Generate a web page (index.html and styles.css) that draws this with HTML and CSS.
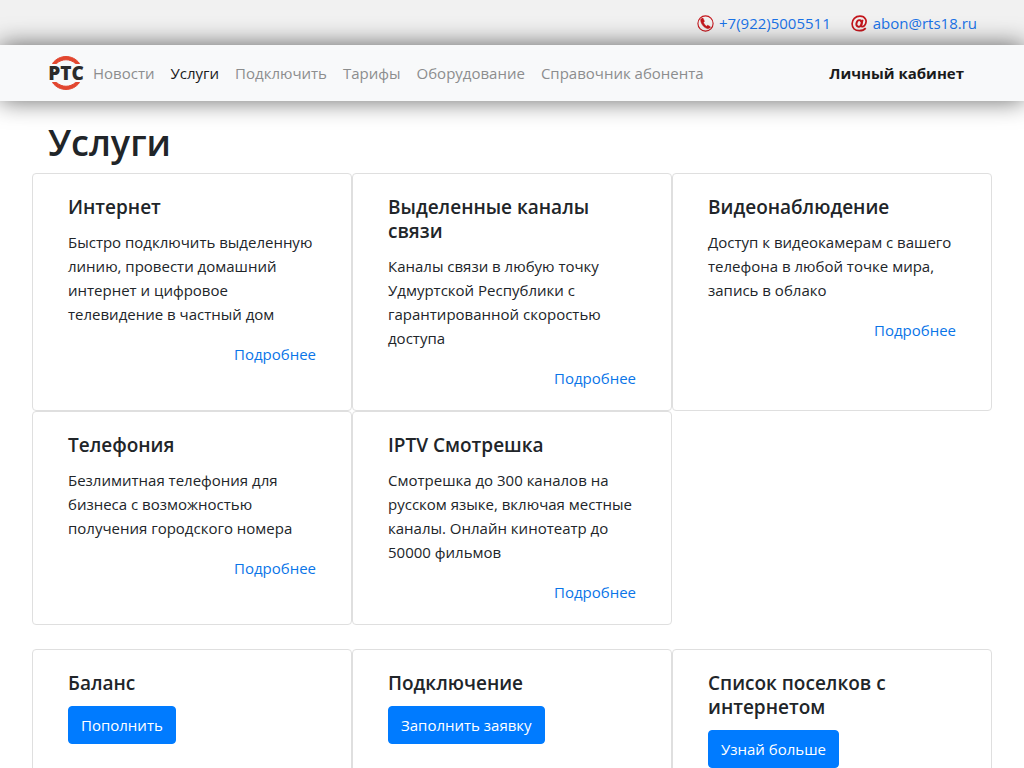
FILE: index.html
```html
<!DOCTYPE html>
<html lang="ru">
<head>
<meta charset="utf-8">
<meta name="viewport" content="width=device-width, initial-scale=1">
<title>РТС — Услуги</title>
<link rel="stylesheet" href="styles.css">
</head>
<body>
<header class="topbar">
  <a class="contact" href="tel:+79225005511">
    <svg class="contact-icon" viewBox="0 0 17 17" aria-hidden="true">
      <circle cx="8.500" cy="8.500" r="7.600" fill="none" stroke="#c4161c" stroke-width="1.100"/>
      <path d="M5.200 3.200 3.700 4.300C3.200 7.600 6.400 12.800 10.800 13.700L13.200 12.700C13.600 12.300 13.500 11.900 13.100 11.600L11.100 10.400C10.700 10.200 10.400 10.300 10.100 10.700L9.600 11.200C8.200 10.500 7 8.800 6.400 7.300L7 6.900C7.400 6.600 7.500 6.300 7.300 5.900L6.200 3.500C6 3.100 5.600 2.900 5.200 3.200Z" fill="#c4161c" stroke="#c4161c" stroke-width="0.500"/>
    </svg>
    <span>+7(922)5005511</span>
  </a>
  <a class="contact" href="mailto:abon@rts18.ru">
    <svg class="contact-icon" viewBox="0 0 17 17" aria-hidden="true" fill="none" stroke="#c4161c">
      <ellipse cx="8" cy="8.400" rx="2.500" ry="3.300" transform="rotate(18 8 8.400)" stroke-width="1.900"/>
      <path d="M11.700 4.700 10.400 10.400C10.200 12.200 12.200 12 13.400 10.700C17.200 5.800 14 1.200 9 1.200C4.400 1.200 1.100 4.500 1.100 8.800C1.100 13 4.100 15.700 8.300 15.700C11 15.700 13.200 14.900 14.700 13.100" stroke-width="1.700"/>
    </svg>
    <span>abon@rts18.ru</span>
  </a>
</header>

<nav class="navbar">
  <a class="brand" href="#" aria-label="РТС">
    <svg class="brand-logo" viewBox="0 0 36 36" role="img" aria-label="РТС">
      <path d="M4.500 8.500C11-.8 25-.8 31.500 8.500L27.500 8.500C22 3.500 14 3.500 8.500 8.500Z" fill="#e2462f" stroke="#e2462f"/>
      <path d="M4.500 27.500C11 36.800 25 36.800 31.500 27.500L27.500 27.500C22 32.500 14 32.500 8.500 27.500Z" fill="#e2462f" stroke="#e2462f"/>
      <text class="brand-text" x="18" y="25" text-anchor="middle">РТС</text>
    </svg>
  </a>
  <ul class="nav-list">
    <li><a class="nav-link" href="#">Новости</a></li>
    <li><a class="nav-link active" href="#" aria-current="page">Услуги</a></li>
    <li><a class="nav-link" href="#">Подключить</a></li>
    <li><a class="nav-link" href="#">Тарифы</a></li>
    <li><a class="nav-link" href="#">Оборудование</a></li>
    <li><a class="nav-link" href="#">Справочник абонента</a></li>
  </ul>
  <a class="account" href="#">Личный кабинет</a>
</nav>

<main class="page">
  <h1 class="page-title">Услуги</h1>
  <section class="cards">
    <article class="card">
      <h2 class="card-title">Интернет</h2>
      <p class="card-text">Быстро подключить выделенную линию, провести домашний интернет и цифровое телевидение в частный дом</p>
      <a class="more" href="#">Подробнее</a>
    </article>
    <article class="card">
      <h2 class="card-title">Выделенные каналы связи</h2>
      <p class="card-text">Каналы связи в любую точку Удмуртской Республики с гарантированной скоростью доступа</p>
      <a class="more" href="#">Подробнее</a>
    </article>
    <article class="card">
      <h2 class="card-title">Видеонаблюдение</h2>
      <p class="card-text">Доступ к видеокамерам с вашего телефона в любой точке мира, запись в облако</p>
      <a class="more" href="#">Подробнее</a>
    </article>
    <article class="card">
      <h2 class="card-title">Телефония</h2>
      <p class="card-text">Безлимитная телефония для бизнеса с возможностью получения городского номера</p>
      <a class="more" href="#">Подробнее</a>
    </article>
    <article class="card">
      <h2 class="card-title">IPTV Смотрешка</h2>
      <p class="card-text">Смотрешка до 300 каналов на русском языке, включая местные каналы. Онлайн кинотеатр до 50000 фильмов</p>
      <a class="more" href="#">Подробнее</a>
    </article>
  </section>
  <section class="cards">
    <article class="card">
      <h2 class="card-title">Баланс</h2>
      <button class="btn" type="button">Пополнить</button>
    </article>
    <article class="card">
      <h2 class="card-title">Подключение</h2>
      <button class="btn" type="button">Заполнить заявку</button>
    </article>
    <article class="card">
      <h2 class="card-title">Список поселков с интернетом</h2>
      <button class="btn" type="button">Узнай больше</button>
    </article>
  </section>
</main>
</body>
</html>
```
FILE: styles.css
```css
* { box-sizing: border-box; }

html { scrollbar-width: none; }

body {
  margin: 0;
  background: #fff;
  color: #212529;
  font-family: "Open Sans", "Noto Sans", sans-serif;
  font-size: 15px;
  line-height: 24px;
}

a { color: #0a75e8; text-decoration: none; }

.topbar {
  display: flex;
  justify-content: flex-end;
  gap: 20px;
  padding: 11px 47px 10px;
  background: #f1f1f1;
}

.contact {
  display: flex;
  align-items: center;
  gap: 5px;
  color: #1a73e8;
}

.contact-icon { width: 17px; height: 17px; }

.navbar {
  position: relative;
  display: flex;
  align-items: center;
  min-height: 56px;
  padding: 8px 60px 8px 48px;
  background: #f8f9fa;
  box-shadow: 0 0 24px rgba(0, 0, 0, 0.6);
}

.brand { display: flex; margin-right: 1px; }

.brand-logo { width: 36px; height: 36px; overflow: visible; }

.brand-text {
  font-family: "Open Sans", sans-serif;
  font-size: 19px;
  font-weight: 800;
  fill: #2b2b2b;
}

.nav-list {
  display: flex;
  margin: 0;
  padding: 0;
  list-style: none;
}

.nav-link { padding: 8px; color: #8c8d8e; }

.nav-link.active { color: #1a1b1c; }

.account {
  margin-left: auto;
  color: #1a1b1c;
  font-weight: 700;
}

.page { padding: 18px 32px 24px; }

.page-title {
  margin: 0 16px 6px;
  font-size: 36px;
  font-weight: 600;
  line-height: 48px;
}

.cards {
  display: grid;
  grid-template-columns: repeat(3, 1fr);
  margin-bottom: 24px;
}

.card {
  display: flex;
  flex-direction: column;
  align-items: flex-start;
  padding: 21px 35px 20px;
  border: 1px solid #dfdfdf;
  border-radius: 4px;
}

.card-title {
  margin: 0 0 11px;
  font-size: 19px;
  font-weight: 600;
  line-height: 24px;
}

.card-text { margin: 0 0 16px; }

.more { align-self: flex-end; }

.btn {
  padding: 6px 12px;
  border: 1px solid #007bff;
  border-radius: 4px;
  background: #007bff;
  color: #fff;
  font: inherit;
  cursor: pointer;
}
```
